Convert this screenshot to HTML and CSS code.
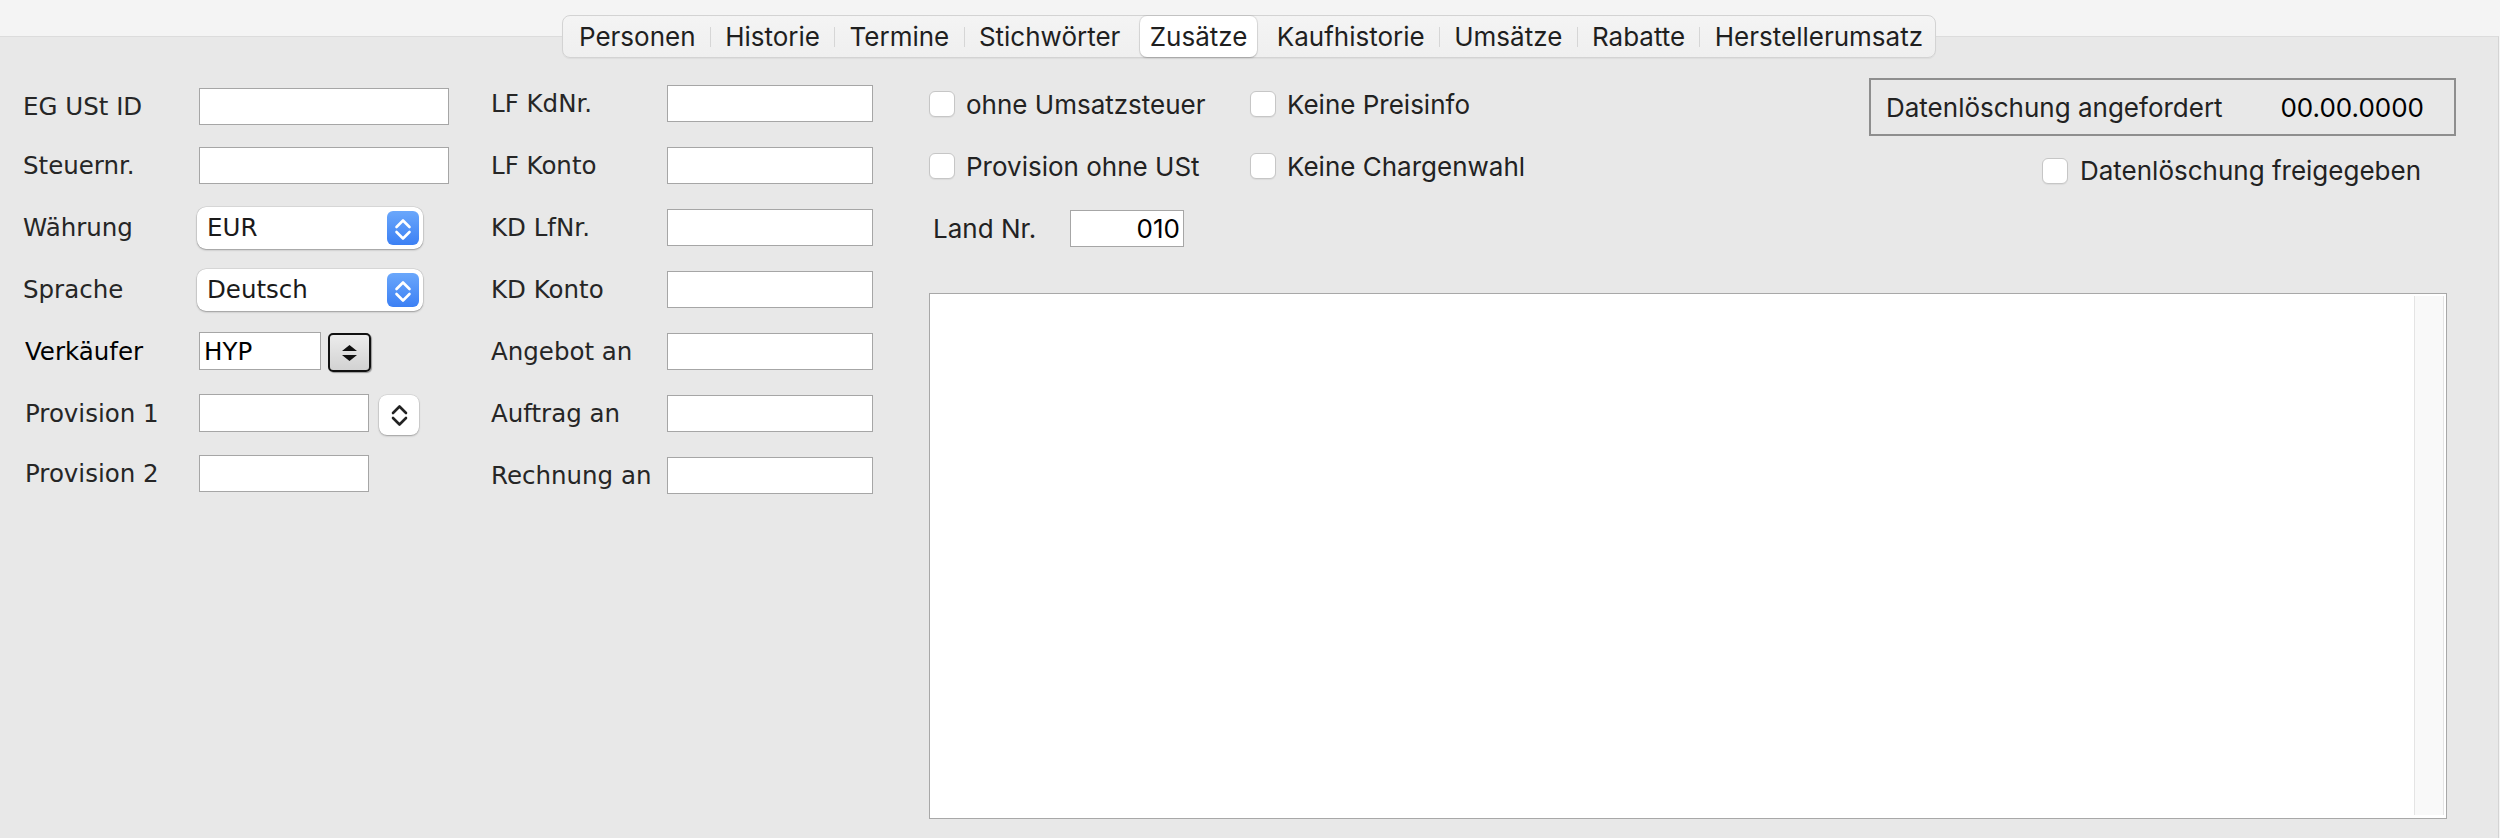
FILE: index.html
```html
<!DOCTYPE html>
<html lang="de">
<head>
<meta charset="utf-8">
<title>Zusätze</title>
<link rel="stylesheet" href="styles.css">
</head>
<body>
<div class="topbar"></div>
<div class="panel">
  <nav class="tabs">
    <div class="tab first">Personen</div><span class="sep"></span>
    <div class="tab">Historie</div><span class="sep"></span>
    <div class="tab">Termine</div><span class="sep"></span>
    <div class="tab">Stichwörter</div>
    <div class="tab active">Zusätze</div>
    <div class="tab">Kaufhistorie</div><span class="sep"></span>
    <div class="tab">Umsätze</div><span class="sep"></span>
    <div class="tab">Rabatte</div><span class="sep"></span>
    <div class="tab last">Herstellerumsatz</div>
  </nav>

  <div class="content">
    <div class="col1">
      <div class="label">EG USt ID</div><div class="field w250"></div>
      <div class="label">Steuernr.</div><div class="field w250"></div>
      <div class="label">Währung</div>
      <div class="combo"><span>EUR</span><span class="combo-btn"><svg width="32" height="34" viewBox="0 0 32 34"><path d="M9.5 16 L16 9.5 L22.5 16 M9.5 21 L16 27.5 L22.5 21" fill="none" stroke="#fff" stroke-width="2.6" stroke-linecap="round" stroke-linejoin="round"/></svg></span></div>
      <div class="label">Sprache</div>
      <div class="combo"><span>Deutsch</span><span class="combo-btn"><svg width="32" height="34" viewBox="0 0 32 34"><path d="M9.5 16 L16 9.5 L22.5 16 M9.5 21 L16 27.5 L22.5 21" fill="none" stroke="#fff" stroke-width="2.6" stroke-linecap="round" stroke-linejoin="round"/></svg></span></div>
      <div class="label indent dark">Verkäufer</div>
      <div class="ctl-row"><div class="field w122 h38 value">HYP</div><div class="spinner"><svg width="39" height="35" viewBox="0 0 39 35"><path d="M12 16 L19.5 10 L27 16 Z M12 20 L19.5 26 L27 20 Z" fill="#111"/></svg></div></div>
      <div class="label indent">Provision 1</div>
      <div class="ctl-row gap10"><div class="field w170 h38"></div><div class="round-btn"><svg width="40" height="40" viewBox="0 0 40 40"><path d="M14 18 L20.5 11.5 L27 18 M14 23 L20.5 29.5 L27 23" fill="none" stroke="#222" stroke-width="2.6" stroke-linecap="round" stroke-linejoin="round"/></svg></div></div>
      <div class="label indent">Provision 2</div><div class="field w170"></div>
    </div>

    <div class="col2">
      <div class="label">LF KdNr.</div><div class="field w206"></div>
      <div class="label">LF Konto</div><div class="field w206"></div>
      <div class="label">KD LfNr.</div><div class="field w206"></div>
      <div class="label">KD Konto</div><div class="field w206"></div>
      <div class="label">Angebot an</div><div class="field w206"></div>
      <div class="label">Auftrag an</div><div class="field w206"></div>
      <div class="label">Rechnung an</div><div class="field w206"></div>
    </div>

    <div class="col3">
      <div class="col3-top">
        <div class="flags">
          <label class="check"><span class="cb"></span>ohne Umsatzsteuer</label>
          <label class="check"><span class="cb"></span>Keine Preisinfo</label>
          <label class="check"><span class="cb"></span>Provision ohne USt</label>
          <label class="check"><span class="cb"></span>Keine Chargenwahl</label>
          <div class="land"><span class="land-label">Land Nr.</span><div class="field land-field">010</div></div>
        </div>
        <div class="gdpr">
          <div class="deletion-box"><span>Datenlöschung angefordert</span><span class="date">00.00.0000</span></div>
          <label class="check release"><span class="cb"></span>Datenlöschung freigegeben</label>
        </div>
      </div>
      <div class="textarea"><div class="scrolltrack"></div></div>
    </div>
  </div>
</div>
</body>
</html>
```

FILE: styles.css
```css
* { box-sizing: border-box; }

html, body {
  margin: 0;
  padding: 0;
}

body {
  width: 2500px;
  height: 838px;
  overflow: hidden;
  background: #f4f4f4;
  font-family: "DejaVu Sans", "Liberation Sans", sans-serif;
  color: #262626;
}

.topbar {
  height: 36px;
}

.panel {
  width: 2499px;
  height: 802px;
  background: #e8e8e8;
  border-top: 1px solid #dcdcdc;
  border-right: 1px solid #d4d4d4;
}

/* ---------- tabs ---------- */
.tabs {
  display: flex;
  align-items: center;
  width: max-content;
  height: 43px;
  margin: -22px auto 0;
  padding: 0 1px;
  background: linear-gradient(#f4f4f4, #efefef);
  border: 1px solid #d3d3d3;
  border-radius: 8px;
  box-shadow: 0 1px 1px rgba(0, 0, 0, 0.05);
  font-family: Inter, "Liberation Sans", sans-serif;
  font-size: 26px;
  color: #1f1f1f;
}

.tab {
  display: flex;
  align-items: center;
  height: 41px;
  padding: 0 14.3px;
  white-space: nowrap;
}

.tab.first { padding-left: 15px; }
.tab.last { padding-right: 11px; }

.tab.active {
  margin: 0 5px;
  padding: 0 10px;
  background: #fff;
  border-radius: 7px;
  box-shadow: 0 0 0 1px rgba(0, 0, 0, 0.07), 0 1px 2px rgba(0, 0, 0, 0.18);
}

.sep {
  width: 1px;
  height: 20px;
  background: #d6d6d6;
  flex: none;
}

/* ---------- content ---------- */
.content {
  display: flex;
  padding-left: 23px;
}

.label {
  font-size: 24.5px;
  color: #262626;
  white-space: nowrap;
}

.label.indent { padding-left: 2px; }
.label.dark { color: #000; }

.field {
  height: 37px;
  background: #fff;
  border: 1px solid #a6a6a6;
}

.field.h38 { height: 38px; }
.w250 { width: 250px; }
.w206 { width: 206px; }
.w170 { width: 170px; }
.w122 { width: 122px; }

.field.value {
  display: flex;
  align-items: center;
  padding-left: 4px;
  font-size: 24.5px;
  color: #000;
}

.col1 {
  width: 468px;
  margin-top: 19px;
  display: grid;
  grid-template-columns: 176px auto;
  grid-template-rows: 58px 61px 63px 61px 62px 62px 59px;
  align-items: center;
  align-content: start;
}

.col2 {
  width: 438px;
  margin-top: 14px;
  display: grid;
  grid-template-columns: 176px 206px;
  grid-auto-rows: 62px;
  align-items: center;
  align-content: start;
}

.combo {
  width: 226px;
  height: 42px;
  margin-left: -2px;
  padding: 0 4px 0 10px;
  display: flex;
  align-items: center;
  justify-content: space-between;
  background: #fff;
  border-radius: 9px;
  box-shadow: 0 0 0 0.5px rgba(0, 0, 0, 0.12), 0 1px 2px rgba(0, 0, 0, 0.3);
  font-size: 24.5px;
  color: #1a1a1a;
}

.combo-btn {
  width: 32px;
  height: 34px;
  display: flex;
  border-radius: 6px;
  background: linear-gradient(#6aa7fb, #3c80f4);
}

.ctl-row {
  display: flex;
  align-items: center;
  gap: 7px;
}

.ctl-row.gap10 { gap: 10px; }

.spinner {
  width: 43px;
  height: 39px;
  margin-top: 2px;
  display: flex;
  align-items: center;
  justify-content: center;
  background: linear-gradient(#ececec, #d2d2d2);
  border: 2px solid #111;
  border-radius: 5px;
  box-shadow: 1px 1px 1px rgba(0, 0, 0, 0.35);
}

.round-btn {
  width: 40px;
  height: 40px;
  margin-top: 4px;
  display: flex;
  background: #fff;
  border-radius: 8px;
  box-shadow: 0 0 0 0.5px rgba(0, 0, 0, 0.12), 0 1px 2px rgba(0, 0, 0, 0.28);
}

/* ---------- right column ---------- */
.col3 {
  width: 1527px;
  display: flex;
  flex-direction: column;
}

.col3-top {
  height: 235px;
  display: flex;
  justify-content: space-between;
}

.flags {
  padding-top: 15px;
  display: grid;
  grid-template-columns: 321px auto;
  grid-auto-rows: 62px;
  align-items: center;
  align-content: start;
}

.check {
  display: flex;
  align-items: center;
  gap: 11px;
  font-family: Inter, "Liberation Sans", sans-serif;
  font-size: 26px;
  color: #222;
  white-space: nowrap;
}

.cb {
  width: 26px;
  height: 26px;
  flex: none;
  background: #fff;
  border: 1px solid #c6c6c6;
  border-radius: 6px;
  box-shadow: 0 1px 1px rgba(0, 0, 0, 0.06);
}

.land {
  grid-column: 1 / span 2;
  display: flex;
  align-items: center;
  font-family: Inter, "Liberation Sans", sans-serif;
  font-size: 26px;
  color: #222;
}

.land-label {
  width: 141px;
  padding-left: 4px;
}

.land-field {
  width: 114px;
  display: flex;
  align-items: center;
  justify-content: flex-end;
  padding-right: 3px;
  color: #000;
}

.gdpr {
  padding-top: 20px;
  display: flex;
  flex-direction: column;
  align-items: flex-end;
}

.deletion-box {
  width: 587px;
  height: 58px;
  padding: 0 30px 0 15px;
  display: flex;
  align-items: center;
  justify-content: space-between;
  border: 2px solid #8e8e8e;
  font-family: Inter, "Liberation Sans", sans-serif;
  font-size: 26px;
  color: #222;
}

.deletion-box .date { color: #000; }

.release {
  margin-top: 19px;
  margin-right: 35px;
  gap: 12px;
}

.textarea {
  width: 1518px;
  height: 526px;
  padding: 2px 2px 3px;
  display: flex;
  justify-content: flex-end;
  background: #fff;
  border: 1px solid #a8a8a8;
}

.scrolltrack {
  width: 30px;
  background: #f9f9f9;
  border-left: 1px solid #e4e4e4;
  border-right: 1px solid #e4e4e4;
}
```
